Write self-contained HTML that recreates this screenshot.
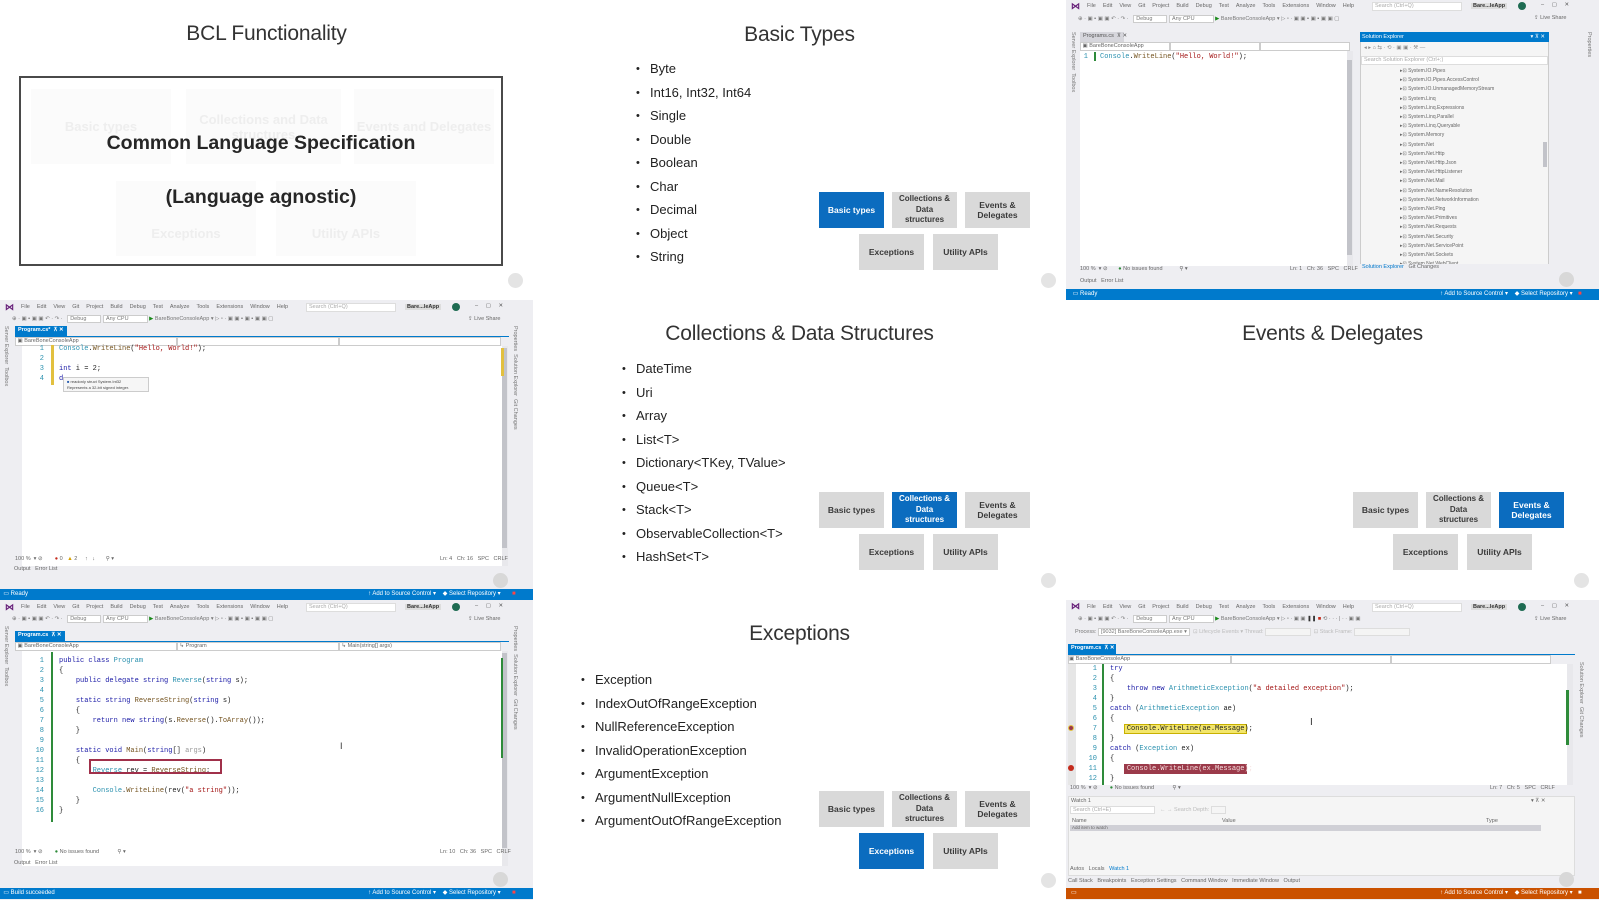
<!DOCTYPE html>
<html><head><meta charset="utf-8">
<style>
*{margin:0;padding:0;box-sizing:border-box}
body{width:1600px;height:899px;background:#fff;position:relative;overflow:hidden;font-family:"Liberation Sans",sans-serif}
.cell{position:absolute;width:533px;height:300px;overflow:hidden;background:#fff}
.title{position:absolute;left:0;width:533px;text-align:center;top:22px;font-size:21px;color:#333;font-weight:300;letter-spacing:-0.2px}
.bl{position:absolute;font-size:13px;color:#222;line-height:16px}
.bl span{position:absolute;left:-14px;font-size:11px}
.btn{position:absolute;width:65px;height:36px;background:#d9d9d9;color:#3a3a3a;font-weight:bold;font-size:8.5px;display:flex;align-items:center;justify-content:center;text-align:center;line-height:10.5px}
.btn.on{background:#0b6cbf;color:#fff}
.play{position:absolute;width:15px;height:15px;border-radius:50%;background:#e4e4e4;left:508px;top:273px}
.vs{position:absolute;width:533px;height:300px;background:#eeeef2;overflow:hidden;font-size:5.5px;color:#666;font-family:"Liberation Sans",sans-serif;white-space:nowrap}
.vs .a{position:absolute}
.menu span{margin-right:7px}
.logo{color:#68217a;font-weight:bold;font-size:9px}
.tab{background:#007acc;color:#fff;font-weight:bold;padding:1px 3px;height:10px}
.tabg{background:#d6d6dc;color:#555;padding:1px 3px;height:10px}
.nav{background:#fff;border:1px solid #ccc;height:9px}
.ed{background:#fff}
.code{font-family:"Liberation Mono",monospace;font-size:7px;line-height:10px;color:#222}
.ln{font-family:"Liberation Mono",monospace;font-size:7px;line-height:10px;color:#2b91af;text-align:right}
.kw{color:#1a1aa6}.ty{color:#2b91af}.st{color:#a31515}.me{color:#74531f}
.sb{background:#007acc;color:#fff;height:11px;font-size:6px;line-height:11px}
.ob{background:#ca5100;color:#fff;height:11px;font-size:6px;line-height:11px}
.vt{writing-mode:vertical-rl;font-size:5.5px;color:#777}
.gh{position:absolute;background:#fbfbfb;color:#eeeeee;font-weight:bold;font-size:13px;display:flex;align-items:center;justify-content:center;text-align:center;line-height:15px}
</style></head><body>

<div class="cell" style="left:0;top:0">
  <div class="title" style="top:22px">BCL Functionality</div>
  <div style="position:absolute;left:19px;top:76px;width:484px;height:190px;border:2px solid #4a4a4a;background:#fff">
    <div class="gh" style="left:10px;top:11px;width:140px;height:75px">Basic types</div>
    <div class="gh" style="left:165px;top:11px;width:155px;height:75px">Collections and Data structures</div>
    <div class="gh" style="left:333px;top:11px;width:140px;height:75px">Events and Delegates</div>
    <div class="gh" style="left:95px;top:103px;width:140px;height:75px;padding-top:30px">Exceptions</div>
    <div class="gh" style="left:255px;top:103px;width:140px;height:75px;padding-top:30px">Utility APIs</div>
    <div style="position:absolute;left:0;width:480px;top:54px;text-align:center;font-weight:bold;font-size:19.5px;color:#262626">Common Language Specification</div>
    <div style="position:absolute;left:0;width:480px;top:108px;text-align:center;font-weight:bold;font-size:19.5px;color:#262626">(Language agnostic)</div>
  </div>
  <div class="play"></div>
</div>

<div class="cell" style="left:533px;top:0">
  <div class="title" style="top:23px">Basic Types</div>
  <div class="bl" style="left:117px;top:61px"><span>•</span>Byte</div>
  <div class="bl" style="left:117px;top:84.5px"><span>•</span>Int16, Int32, Int64</div>
  <div class="bl" style="left:117px;top:108px"><span>•</span>Single</div>
  <div class="bl" style="left:117px;top:131.5px"><span>•</span>Double</div>
  <div class="bl" style="left:117px;top:155px"><span>•</span>Boolean</div>
  <div class="bl" style="left:117px;top:178.5px"><span>•</span>Char</div>
  <div class="bl" style="left:117px;top:202px"><span>•</span>Decimal</div>
  <div class="bl" style="left:117px;top:225.5px"><span>•</span>Object</div>
  <div class="bl" style="left:117px;top:249px"><span>•</span>String</div>
  <div class="btn on" style="left:286px;top:192px">Basic types</div>
  <div class="btn" style="left:359px;top:192px;font-size:8px">Collections &amp;<br>Data<br>structures</div>
  <div class="btn" style="left:432px;top:192px">Events &amp;<br>Delegates</div>
  <div class="btn" style="left:326px;top:234px">Exceptions</div>
  <div class="btn" style="left:400px;top:234px">Utility APIs</div>
  <div class="play"></div>
</div>

<div class="cell" style="left:533px;top:300px">
  <div class="title" style="top:22px">Collections &amp; Data Structures</div>
  <div class="bl" style="left:103px;top:61px"><span>•</span>DateTime</div>
  <div class="bl" style="left:103px;top:84.5px"><span>•</span>Uri</div>
  <div class="bl" style="left:103px;top:108px"><span>•</span>Array</div>
  <div class="bl" style="left:103px;top:131.5px"><span>•</span>List&lt;T&gt;</div>
  <div class="bl" style="left:103px;top:155px"><span>•</span>Dictionary&lt;TKey, TValue&gt;</div>
  <div class="bl" style="left:103px;top:178.5px"><span>•</span>Queue&lt;T&gt;</div>
  <div class="bl" style="left:103px;top:202px"><span>•</span>Stack&lt;T&gt;</div>
  <div class="bl" style="left:103px;top:225.5px"><span>•</span>ObservableCollection&lt;T&gt;</div>
  <div class="bl" style="left:103px;top:249px"><span>•</span>HashSet&lt;T&gt;</div>
  <div class="btn" style="left:286px;top:192px">Basic types</div>
  <div class="btn on" style="left:359px;top:192px;font-size:8px">Collections &amp;<br>Data<br>structures</div>
  <div class="btn" style="left:432px;top:192px">Events &amp;<br>Delegates</div>
  <div class="btn" style="left:326px;top:234px">Exceptions</div>
  <div class="btn" style="left:400px;top:234px">Utility APIs</div>
  <div class="play"></div>
</div>

<div class="cell" style="left:533px;top:600px">
  <div class="title" style="top:22px">Exceptions</div>
  <div class="bl" style="left:62px;top:72px"><span>•</span>Exception</div>
  <div class="bl" style="left:62px;top:95.5px"><span>•</span>IndexOutOfRangeException</div>
  <div class="bl" style="left:62px;top:119px"><span>•</span>NullReferenceException</div>
  <div class="bl" style="left:62px;top:142.5px"><span>•</span>InvalidOperationException</div>
  <div class="bl" style="left:62px;top:166px"><span>•</span>ArgumentException</div>
  <div class="bl" style="left:62px;top:189.5px"><span>•</span>ArgumentNullException</div>
  <div class="bl" style="left:62px;top:213px"><span>•</span>ArgumentOutOfRangeException</div>
  <div class="btn" style="left:286px;top:191px">Basic types</div>
  <div class="btn" style="left:359px;top:191px;font-size:8px">Collections &amp;<br>Data<br>structures</div>
  <div class="btn" style="left:432px;top:191px">Events &amp;<br>Delegates</div>
  <div class="btn on" style="left:326px;top:233px">Exceptions</div>
  <div class="btn" style="left:400px;top:233px">Utility APIs</div>
  <div class="play"></div>
</div>

<div class="cell" style="left:1066px;top:300px">
  <div class="title" style="top:22px">Events &amp; Delegates</div>
  <div class="btn" style="left:287px;top:192px">Basic types</div>
  <div class="btn" style="left:360px;top:192px;font-size:8px">Collections &amp;<br>Data<br>structures</div>
  <div class="btn on" style="left:433px;top:192px">Events &amp;<br>Delegates</div>
  <div class="btn" style="left:327px;top:234px">Exceptions</div>
  <div class="btn" style="left:401px;top:234px">Utility APIs</div>
  <div class="play"></div>
</div>

<div class="vs" style="left:0;top:300px">
  <div class="a logo" style="left:5px;top:2px">⋈</div>
  <div class="a menu" style="left:21px;top:4px"><span>File</span><span>Edit</span><span>View</span><span>Git</span><span>Project</span><span>Build</span><span>Debug</span><span>Test</span><span>Analyze</span><span>Tools</span><span>Extensions</span><span>Window</span><span>Help</span></div>
  <div class="a" style="left:306px;top:3px;width:90px;height:9px;background:#fff;border:1px solid #ddd;color:#aaa;padding-left:2px">Search (Ctrl+Q)</div>
  <div class="a" style="left:405px;top:4px;background:#ddd;padding:0 2px;font-weight:bold;color:#333">Bare...leApp</div>
  <div class="a" style="left:452px;top:3px;width:8px;height:8px;border-radius:50%;background:#1e6b52"></div>
  <div class="a" style="left:475px;top:3px;color:#555">–&nbsp;&nbsp;&nbsp;&nbsp;&nbsp;▢&nbsp;&nbsp;&nbsp;&nbsp;&nbsp;✕</div>
  <div class="a" style="left:12px;top:16px;color:#777">⊕ ·  ▣ ▪ ▣ ▣  ↶ ·  ↷ ·&nbsp;&nbsp; <span style="background:#fff;border:1px solid #ccc;padding:0 14px 0 2px">Debug</span> <span style="background:#fff;border:1px solid #ccc;padding:0 18px 0 2px">Any CPU</span> <span style="color:#1a8a1a">▶</span> BareBoneConsoleApp ▾ ▷ ▫ ·  ▣ ▣ ▪ ▣ ▪ ▣ ▣ ▢</div>
  <div class="a" style="left:468px;top:16px">⇪ Live Share</div>
  <div class="a vt" style="left:3px;top:26px">Server Explorer&nbsp;&nbsp;Toolbox</div>
  <div class="a vt" style="left:512px;top:26px">Properties&nbsp;&nbsp;Solution Explorer&nbsp;&nbsp;Git Changes</div>
  <div class="a tab" style="left:15px;top:26px;width:52px">Program.cs*&nbsp; ⊼ ✕</div>
  <div class="a" style="left:15px;top:36px;width:494px;height:1px;background:#007acc"></div>
  <div class="a nav" style="left:15px;top:37px;width:162px">&nbsp;▣ BareBoneConsoleApp</div>
  <div class="a nav" style="left:177px;top:37px;width:162px"></div>
  <div class="a nav" style="left:339px;top:37px;width:162px"></div>
  <div class="a ed" style="left:22px;top:46px;width:480px;height:220px"></div>
  <div class="a ln" style="left:30px;top:44px;width:14px">1<br>2<br>3<br>4</div>
  <div class="a" style="left:51px;top:45px;width:3px;height:40px;background:#e2c03f"></div>
  <div class="a code" style="left:59px;top:44px"><span class="ty">Console</span>.<span class="me">WriteLine</span>(<span class="st">"Hello, World!"</span>);<br><br><span class="kw">int</span> i = 2;<br><span class="kw">d</span></div>
  <div class="a" style="left:63px;top:77px;width:86px;height:15px;background:#f6f6f6;border:1px solid #ccc;font-size:4px;color:#444;line-height:6px;padding:1px 3px"><span style="color:#2a5fb0">■</span> readonly struct System.Int32<br>Represents a 32-bit signed integer.</div>
  <div class="a" style="left:502px;top:46px;width:6px;height:220px;background:#e8e8ec"></div>
  <div class="a" style="left:502px;top:48px;width:5px;height:200px;background:#c2c3c9"></div>
  <div class="a" style="left:501px;top:48px;width:3px;height:28px;background:#e2c03f"></div>
  <div class="a" style="left:15px;top:256px">100 %&nbsp; ▾ ⊘&nbsp;&nbsp;&nbsp;&nbsp;&nbsp;&nbsp;&nbsp; <span style="color:#c42b1c">●</span> 0&nbsp;&nbsp;&nbsp;<span style="color:#d6a000">▲</span> 2&nbsp;&nbsp;&nbsp;&nbsp;&nbsp;↑&nbsp;&nbsp;&nbsp;↓&nbsp;&nbsp;&nbsp;&nbsp;&nbsp;&nbsp; ⚲ ▾</div>
  <div class="a" style="left:440px;top:256px">Ln: 4&nbsp;&nbsp;&nbsp;Ch: 16&nbsp;&nbsp;&nbsp;SPC&nbsp;&nbsp;&nbsp;CRLF</div>
  <div class="a" style="left:14px;top:266px">Output&nbsp;&nbsp;&nbsp;Error List</div>
  <div class="a sb" style="left:0;top:289px;width:533px">&nbsp;&nbsp;▭ Ready<span style="position:absolute;left:368px">↑ Add to Source Control ▾&nbsp;&nbsp;&nbsp;&nbsp;◆ Select Repository ▾</span><span style="position:absolute;left:512px;color:#f44">■</span></div>
  <div class="a" style="left:493px;top:273px;width:15px;height:15px;border-radius:50%;background:#d8d8d8"></div>
</div>

<div class="vs" style="left:0;top:600px">
  <div class="a logo" style="left:5px;top:2px">⋈</div>
  <div class="a menu" style="left:21px;top:4px"><span>File</span><span>Edit</span><span>View</span><span>Git</span><span>Project</span><span>Build</span><span>Debug</span><span>Test</span><span>Analyze</span><span>Tools</span><span>Extensions</span><span>Window</span><span>Help</span></div>
  <div class="a" style="left:306px;top:3px;width:90px;height:9px;background:#fff;border:1px solid #ddd;color:#aaa;padding-left:2px">Search (Ctrl+Q)</div>
  <div class="a" style="left:405px;top:4px;background:#ddd;padding:0 2px;font-weight:bold;color:#333">Bare...leApp</div>
  <div class="a" style="left:452px;top:3px;width:8px;height:8px;border-radius:50%;background:#1e6b52"></div>
  <div class="a" style="left:475px;top:3px;color:#555">–&nbsp;&nbsp;&nbsp;&nbsp;&nbsp;▢&nbsp;&nbsp;&nbsp;&nbsp;&nbsp;✕</div>
  <div class="a" style="left:12px;top:16px;color:#777">⊕ ·  ▣ ▪ ▣ ▣  ↶ ·  ↷ ·&nbsp;&nbsp; <span style="background:#fff;border:1px solid #ccc;padding:0 14px 0 2px">Debug</span> <span style="background:#fff;border:1px solid #ccc;padding:0 18px 0 2px">Any CPU</span> <span style="color:#1a8a1a">▶</span> BareBoneConsoleApp ▾ ▷ ▫ ·  ▣ ▣ ▪ ▣ ▪ ▣ ▣ ▢</div>
  <div class="a" style="left:468px;top:16px">⇪ Live Share</div>
  <div class="a vt" style="left:3px;top:26px">Server Explorer&nbsp;&nbsp;Toolbox</div>
  <div class="a vt" style="left:512px;top:26px">Properties&nbsp;&nbsp;Solution Explorer&nbsp;&nbsp;Git Changes</div>
  <div class="a tab" style="left:15px;top:31px;width:50px">Program.cs&nbsp; ⊼ ✕</div>
  <div class="a" style="left:15px;top:41px;width:494px;height:1px;background:#007acc"></div>
  <div class="a nav" style="left:15px;top:42px;width:162px">&nbsp;▣ BareBoneConsoleApp</div>
  <div class="a nav" style="left:177px;top:42px;width:162px">&nbsp;↳ Program</div>
  <div class="a nav" style="left:339px;top:42px;width:162px">&nbsp;↳ Main(string[] args)</div>
  <div class="a ed" style="left:22px;top:51px;width:480px;height:215px"></div>
  <div class="a ln" style="left:28px;top:56px;width:16px">1<br>2<br>3<br>4<br>5<br>6<br>7<br>8<br>9<br>10<br>11<br>12<br>13<br>14<br>15<br>16</div>
  <div class="a" style="left:51px;top:52px;width:2px;height:170px;background:#2e8b3a"></div>
  <div class="a code" style="left:59px;top:56px;white-space:pre"><span class="kw">public class</span> <span class="ty">Program</span>
{
    <span class="kw">public delegate string</span> <span class="ty">Reverse</span>(<span class="kw">string</span> s);

    <span class="kw">static string</span> <span class="me">ReverseString</span>(<span class="kw">string</span> s)
    {
        <span class="kw">return new string</span>(s.<span class="me">Reverse</span>().<span class="me">ToArray</span>());
    }

    <span class="kw">static void</span> <span class="me">Main</span>(<span class="kw">string</span>[] <span style="color:#999">args</span>)
    {
        <span class="ty">Reverse</span> rev = <span class="me">ReverseString</span>;

        <span class="ty">Console</span>.<span class="me">WriteLine</span>(rev(<span class="st">"a string"</span>));
    }
}</div>
  <div class="a" style="left:89px;top:159px;width:133px;height:15px;border:2px solid #a0304a"></div>
  <div class="a" style="left:340px;top:141px;font-size:9px;color:#333">I</div>
  <div class="a" style="left:502px;top:51px;width:6px;height:215px;background:#e8e8ec"></div>
  <div class="a" style="left:502px;top:53px;width:5px;height:195px;background:#c2c3c9"></div>
  <div class="a" style="left:501px;top:58px;width:2px;height:100px;background:#2e8b3a"></div>
  <div class="a" style="left:15px;top:249px">100 %&nbsp; ▾ ⊘&nbsp;&nbsp;&nbsp;&nbsp;&nbsp;&nbsp;&nbsp; <span style="color:#2e8b3a">●</span> No issues found&nbsp;&nbsp;&nbsp;&nbsp;&nbsp;&nbsp;&nbsp;&nbsp;&nbsp;&nbsp;&nbsp; ⚲ ▾</div>
  <div class="a" style="left:440px;top:249px">Ln: 10&nbsp;&nbsp;&nbsp;Ch: 36&nbsp;&nbsp;&nbsp;SPC&nbsp;&nbsp;&nbsp;CRLF</div>
  <div class="a" style="left:14px;top:260px">Output&nbsp;&nbsp;&nbsp;Error List</div>
  <div class="a sb" style="left:0;top:288px;width:533px">&nbsp;&nbsp;▭ Build succeeded<span style="position:absolute;left:368px">↑ Add to Source Control ▾&nbsp;&nbsp;&nbsp;&nbsp;◆ Select Repository ▾</span><span style="position:absolute;left:512px;color:#f44">■</span></div>
  <div class="a" style="left:493px;top:272px;width:15px;height:15px;border-radius:50%;background:#d8d8d8"></div>
</div>

<div class="vs" style="left:1066px;top:0">
  <div class="a logo" style="left:5px;top:1px">⋈</div>
  <div class="a menu" style="left:21px;top:3px"><span>File</span><span>Edit</span><span>View</span><span>Git</span><span>Project</span><span>Build</span><span>Debug</span><span>Test</span><span>Analyze</span><span>Tools</span><span>Extensions</span><span>Window</span><span>Help</span></div>
  <div class="a" style="left:306px;top:2px;width:90px;height:9px;background:#fff;border:1px solid #ddd;color:#aaa;padding-left:2px">Search (Ctrl+Q)</div>
  <div class="a" style="left:405px;top:3px;background:#ddd;padding:0 2px;font-weight:bold;color:#333">Bare...leApp</div>
  <div class="a" style="left:452px;top:2px;width:8px;height:8px;border-radius:50%;background:#1e6b52"></div>
  <div class="a" style="left:475px;top:2px;color:#555">–&nbsp;&nbsp;&nbsp;&nbsp;&nbsp;▢&nbsp;&nbsp;&nbsp;&nbsp;&nbsp;✕</div>
  <div class="a" style="left:12px;top:16px;color:#777">⊕ ·  ▣ ▪ ▣ ▣  ↶ ·  ↷ ·&nbsp;&nbsp; <span style="background:#fff;border:1px solid #ccc;padding:0 14px 0 2px">Debug</span> <span style="background:#fff;border:1px solid #ccc;padding:0 18px 0 2px">Any CPU</span> <span style="color:#1a8a1a">▶</span> BareBoneConsoleApp ▾ ▷ ▫ ·  ▣ ▣ ▪ ▣ ▪ ▣ ▣ ▢</div>
  <div class="a" style="left:468px;top:15px">⇪ Live Share</div>
  <div class="a vt" style="left:4px;top:32px">Server Explorer&nbsp;&nbsp;Toolbox</div>
  <div class="a vt" style="left:520px;top:32px">Properties</div>
  <div class="a tabg" style="left:14px;top:32px;width:44px">Programs.cs&nbsp; ⊼ ✕</div>
  <div class="a nav" style="left:14px;top:42px;width:90px">&nbsp;▣ BareBoneConsoleApp</div>
  <div class="a nav" style="left:104px;top:42px;width:90px"></div>
  <div class="a nav" style="left:194px;top:42px;width:90px"></div>
  <div class="a ed" style="left:14px;top:51px;width:272px;height:215px"></div>
  <div class="a ln" style="left:10px;top:52px;width:12px">1</div>
  <div class="a" style="left:28px;top:52px;width:2px;height:9px;background:#2e8b3a"></div>
  <div class="a code" style="left:34px;top:52px"><span class="ty">Console</span>.<span class="me">WriteLine</span>(<span class="st">"Hello, World!"</span>);</div>
  <div class="a" style="left:281px;top:51px;width:6px;height:215px;background:#e8e8ec"></div>
  <div class="a" style="left:281px;top:60px;width:5px;height:195px;background:#c2c3c9"></div>
  <div class="a" style="left:294px;top:32px;width:189px;height:238px;background:#f5f5f5;border:1px solid #ccc"></div>
  <div class="a" style="left:294px;top:32px;width:189px;height:10px;background:#007acc;color:#fff;padding:2px 2px">Solution Explorer<span style="position:absolute;right:4px">▾ ⊼ ✕</span></div>
  <div class="a" style="left:298px;top:45px;color:#888">◂ ▸ ⌂ ⇆ · ⟲ · ▣ ▣ · ⚒ —</div>
  <div class="a" style="left:295px;top:56px;width:187px;height:9px;background:#fff;border:1px solid #ddd;color:#aaa;padding-left:2px">Search Solution Explorer (Ctrl+;)</div>
  <div class="a" style="left:334px;top:67px;line-height:9.2px;color:#666;font-size:5px">
  ▸⊡ System.IO.Pipes<br>▸⊡ System.IO.Pipes.AccessControl<br>▸⊡ System.IO.UnmanagedMemoryStream<br>▸⊡ System.Linq<br>▸⊡ System.Linq.Expressions<br>▸⊡ System.Linq.Parallel<br>▸⊡ System.Linq.Queryable<br>▸⊡ System.Memory<br>▸⊡ System.Net<br>▸⊡ System.Net.Http<br>▸⊡ System.Net.Http.Json<br>▸⊡ System.Net.HttpListener<br>▸⊡ System.Net.Mail<br>▸⊡ System.Net.NameResolution<br>▸⊡ System.Net.NetworkInformation<br>▸⊡ System.Net.Ping<br>▸⊡ System.Net.Primitives<br>▸⊡ System.Net.Requests<br>▸⊡ System.Net.Security<br>▸⊡ System.Net.ServicePoint<br>▸⊡ System.Net.Sockets<br>▸⊡ System.Net.WebClient</div>
  <div class="a" style="left:477px;top:142px;width:4px;height:25px;background:#c2c3c9"></div>
  <div class="a" style="left:294px;top:264px;width:189px;height:8px;background:#eeeef2;padding-left:2px"><span style="color:#007acc">Solution Explorer</span>&nbsp;&nbsp; Git Changes</div>
  <div class="a" style="left:14px;top:266px">100 %&nbsp; ▾ ⊘&nbsp;&nbsp;&nbsp;&nbsp;&nbsp;&nbsp; <span style="color:#2e8b3a">●</span> No issues found&nbsp;&nbsp;&nbsp;&nbsp;&nbsp;&nbsp;&nbsp;&nbsp;&nbsp;&nbsp; ⚲ ▾</div>
  <div class="a" style="left:224px;top:266px">Ln: 1&nbsp;&nbsp;&nbsp;Ch: 36&nbsp;&nbsp;&nbsp;SPC&nbsp;&nbsp;&nbsp;CRLF</div>
  <div class="a" style="left:14px;top:278px">Output&nbsp;&nbsp;&nbsp;Error List</div>
  <div class="a sb" style="left:0;top:289px;width:533px">&nbsp;&nbsp;&nbsp;&nbsp;▭ Ready<span style="position:absolute;left:374px">↑ Add to Source Control ▾&nbsp;&nbsp;&nbsp;&nbsp;◆ Select Repository ▾</span><span style="position:absolute;left:512px;color:#f44">■</span></div>
  <div class="a" style="left:493px;top:272px;width:15px;height:15px;border-radius:50%;background:#d8d8d8"></div>
</div>

<div class="vs" style="left:1066px;top:600px">
  <div class="a logo" style="left:5px;top:1px">⋈</div>
  <div class="a menu" style="left:21px;top:4px"><span>File</span><span>Edit</span><span>View</span><span>Git</span><span>Project</span><span>Build</span><span>Debug</span><span>Test</span><span>Analyze</span><span>Tools</span><span>Extensions</span><span>Window</span><span>Help</span></div>
  <div class="a" style="left:306px;top:3px;width:90px;height:9px;background:#fff;border:1px solid #ddd;color:#aaa;padding-left:2px">Search (Ctrl+Q)</div>
  <div class="a" style="left:405px;top:4px;background:#ddd;padding:0 2px;font-weight:bold;color:#333">Bare...leApp</div>
  <div class="a" style="left:452px;top:3px;width:8px;height:8px;border-radius:50%;background:#1e6b52"></div>
  <div class="a" style="left:475px;top:3px;color:#555">–&nbsp;&nbsp;&nbsp;&nbsp;&nbsp;▢&nbsp;&nbsp;&nbsp;&nbsp;&nbsp;✕</div>
  <div class="a" style="left:12px;top:16px;color:#777">⊕ ·  ▣ ▪ ▣ ▣  ↶ ·  ↷ ·&nbsp;&nbsp; <span style="background:#fff;border:1px solid #ccc;padding:0 14px 0 2px">Debug</span> <span style="background:#fff;border:1px solid #ccc;padding:0 18px 0 2px">Any CPU</span> <span style="color:#1a8a1a">▶</span> BareBoneConsoleApp ▾ ▷ ▫ ·  ▣ ▣ <span style="color:#333">❚❚</span> <span style="color:#c42b1c">■</span> ⟲ · · · | · · ▣ ▣</div>
  <div class="a" style="left:468px;top:16px">⇪ Live Share</div>
  <div class="a" style="left:9px;top:29px;color:#777">Process: <span style="background:#fff;border:1px solid #ccc;padding:0 2px">[9032] BareBoneConsoleApp.exe ▾</span>&nbsp;&nbsp;<span style="color:#bbb">⊡ Lifecycle Events ▾ Thread:</span> <span style="background:#f4f4f4;border:1px solid #ddd;padding:0 40px 0 2px">&nbsp;</span>&nbsp;&nbsp;<span style="color:#bbb">⊡ Stack Frame:</span> <span style="background:#f4f4f4;border:1px solid #ddd;padding:0 50px 0 2px">&nbsp;</span></div>
  <div class="a vt" style="left:512px;top:62px">Solution Explorer&nbsp;&nbsp;Git Changes</div>
  <div class="a tab" style="left:2px;top:44px;width:48px">Program.cs&nbsp; ⊼ ✕</div>
  <div class="a" style="left:2px;top:54px;width:507px;height:1px;background:#007acc"></div>
  <div class="a nav" style="left:2px;top:55px;width:163px">▣ BareBoneConsoleApp</div>
  <div class="a nav" style="left:165px;top:55px;width:160px"></div>
  <div class="a nav" style="left:325px;top:55px;width:160px"></div>
  <div class="a ed" style="left:2px;top:64px;width:500px;height:121px"></div>
  <div class="a" style="left:2px;top:64px;width:8px;height:121px;background:#e6e6e6"></div>
  <div class="a ln" style="left:18px;top:64px;width:13px">1<br>2<br>3<br>4<br>5<br>6<br>7<br>8<br>9<br>10<br>11<br>12</div>
  <div class="a" style="left:36px;top:64px;width:2px;height:121px;background:#2e8b3a"></div>
  <div class="a" style="left:58px;top:124px;width:123px;height:10px;background:#f3e66b;border:1px solid #c8b000"></div>
  <div class="a" style="left:58px;top:164px;width:123px;height:10px;background:#9b3a4a"></div>
  <div class="a" style="left:2px;top:125px;width:6px;height:6px;border-radius:50%;background:#9b3a4a;border:1px solid #e2c03f"></div>
  <div class="a" style="left:2px;top:165px;width:6px;height:6px;border-radius:50%;background:#c42b1c"></div>
  <div class="a code" style="left:44px;top:64px;white-space:pre"><span class="kw">try</span>
{
    <span class="kw">throw new</span> <span class="ty">ArithmeticException</span>(<span class="st">"a detailed exception"</span>);
}
<span class="kw">catch</span> (<span class="ty">ArithmeticException</span> ae)
{
    <span style="color:#222">Console.WriteLine(ae.Message);</span>
}
<span class="kw">catch</span> (<span class="ty">Exception</span> ex)
{
    <span style="color:#f4dede">Console.WriteLine(ex.Message);</span>
}</div>
  <div class="a" style="left:244px;top:117px;font-size:10px;color:#333">I</div>
  <div class="a" style="left:501px;top:64px;width:6px;height:121px;background:#e8e8ec"></div>
  <div class="a" style="left:500px;top:90px;width:3px;height:55px;background:#2e8b3a"></div>
  <div class="a" style="left:4px;top:185px;width:505px;height:9px;background:#eeeef2">100 %&nbsp; ▾ ⊘&nbsp;&nbsp;&nbsp;&nbsp;&nbsp;&nbsp;&nbsp; <span style="color:#2e8b3a">●</span> No issues found&nbsp;&nbsp;&nbsp;&nbsp;&nbsp;&nbsp;&nbsp;&nbsp;&nbsp;&nbsp;&nbsp; ⚲ ▾<span style="position:absolute;left:420px">Ln: 7&nbsp;&nbsp;&nbsp;Ch: 5&nbsp;&nbsp;&nbsp;SPC&nbsp;&nbsp;&nbsp;CRLF</span></div>
  <div class="a" style="left:2px;top:196px;width:507px;height:80px;background:#f5f5f5;border:1px solid #ddd"></div>
  <div class="a" style="left:5px;top:198px">Watch 1<span style="position:absolute;left:460px">▾ ⊼ ✕</span></div>
  <div class="a" style="left:4px;top:206px;width:85px;height:8px;background:#fff;border:1px solid #ddd;color:#aaa;padding-left:2px">Search (Ctrl+E)</div>
  <div class="a" style="left:94px;top:207px;color:#bbb">← → Search Depth: <span style="border:1px solid #ddd;padding:0 6px">&nbsp;</span></div>
  <div class="a" style="left:6px;top:218px">Name<span style="position:absolute;left:150px">Value</span><span style="position:absolute;left:414px">Type</span></div>
  <div class="a" style="left:4px;top:225px;width:471px;height:6px;background:#d0d0d6;font-size:4.5px;padding-left:2px;line-height:6px">Add item to watch</div>
  <div class="a" style="left:4px;top:266px">Autos&nbsp;&nbsp;&nbsp;Locals&nbsp;&nbsp;&nbsp;<span style="color:#007acc">Watch 1</span></div>
  <div class="a" style="left:2px;top:278px">Call Stack&nbsp;&nbsp;&nbsp;Breakpoints&nbsp;&nbsp;&nbsp;Exception Settings&nbsp;&nbsp;&nbsp;Command Window&nbsp;&nbsp;&nbsp;Immediate Window&nbsp;&nbsp;&nbsp;Output</div>
  <div class="a ob" style="left:0;top:288px;width:533px">&nbsp;&nbsp;&nbsp;▭<span style="position:absolute;left:374px">↑ Add to Source Control ▾&nbsp;&nbsp;&nbsp;&nbsp;◆ Select Repository ▾</span><span style="position:absolute;left:512px">■</span></div>
  <div class="a" style="left:493px;top:272px;width:15px;height:15px;border-radius:50%;background:#d8d8d8"></div>
</div>

</body></html>
